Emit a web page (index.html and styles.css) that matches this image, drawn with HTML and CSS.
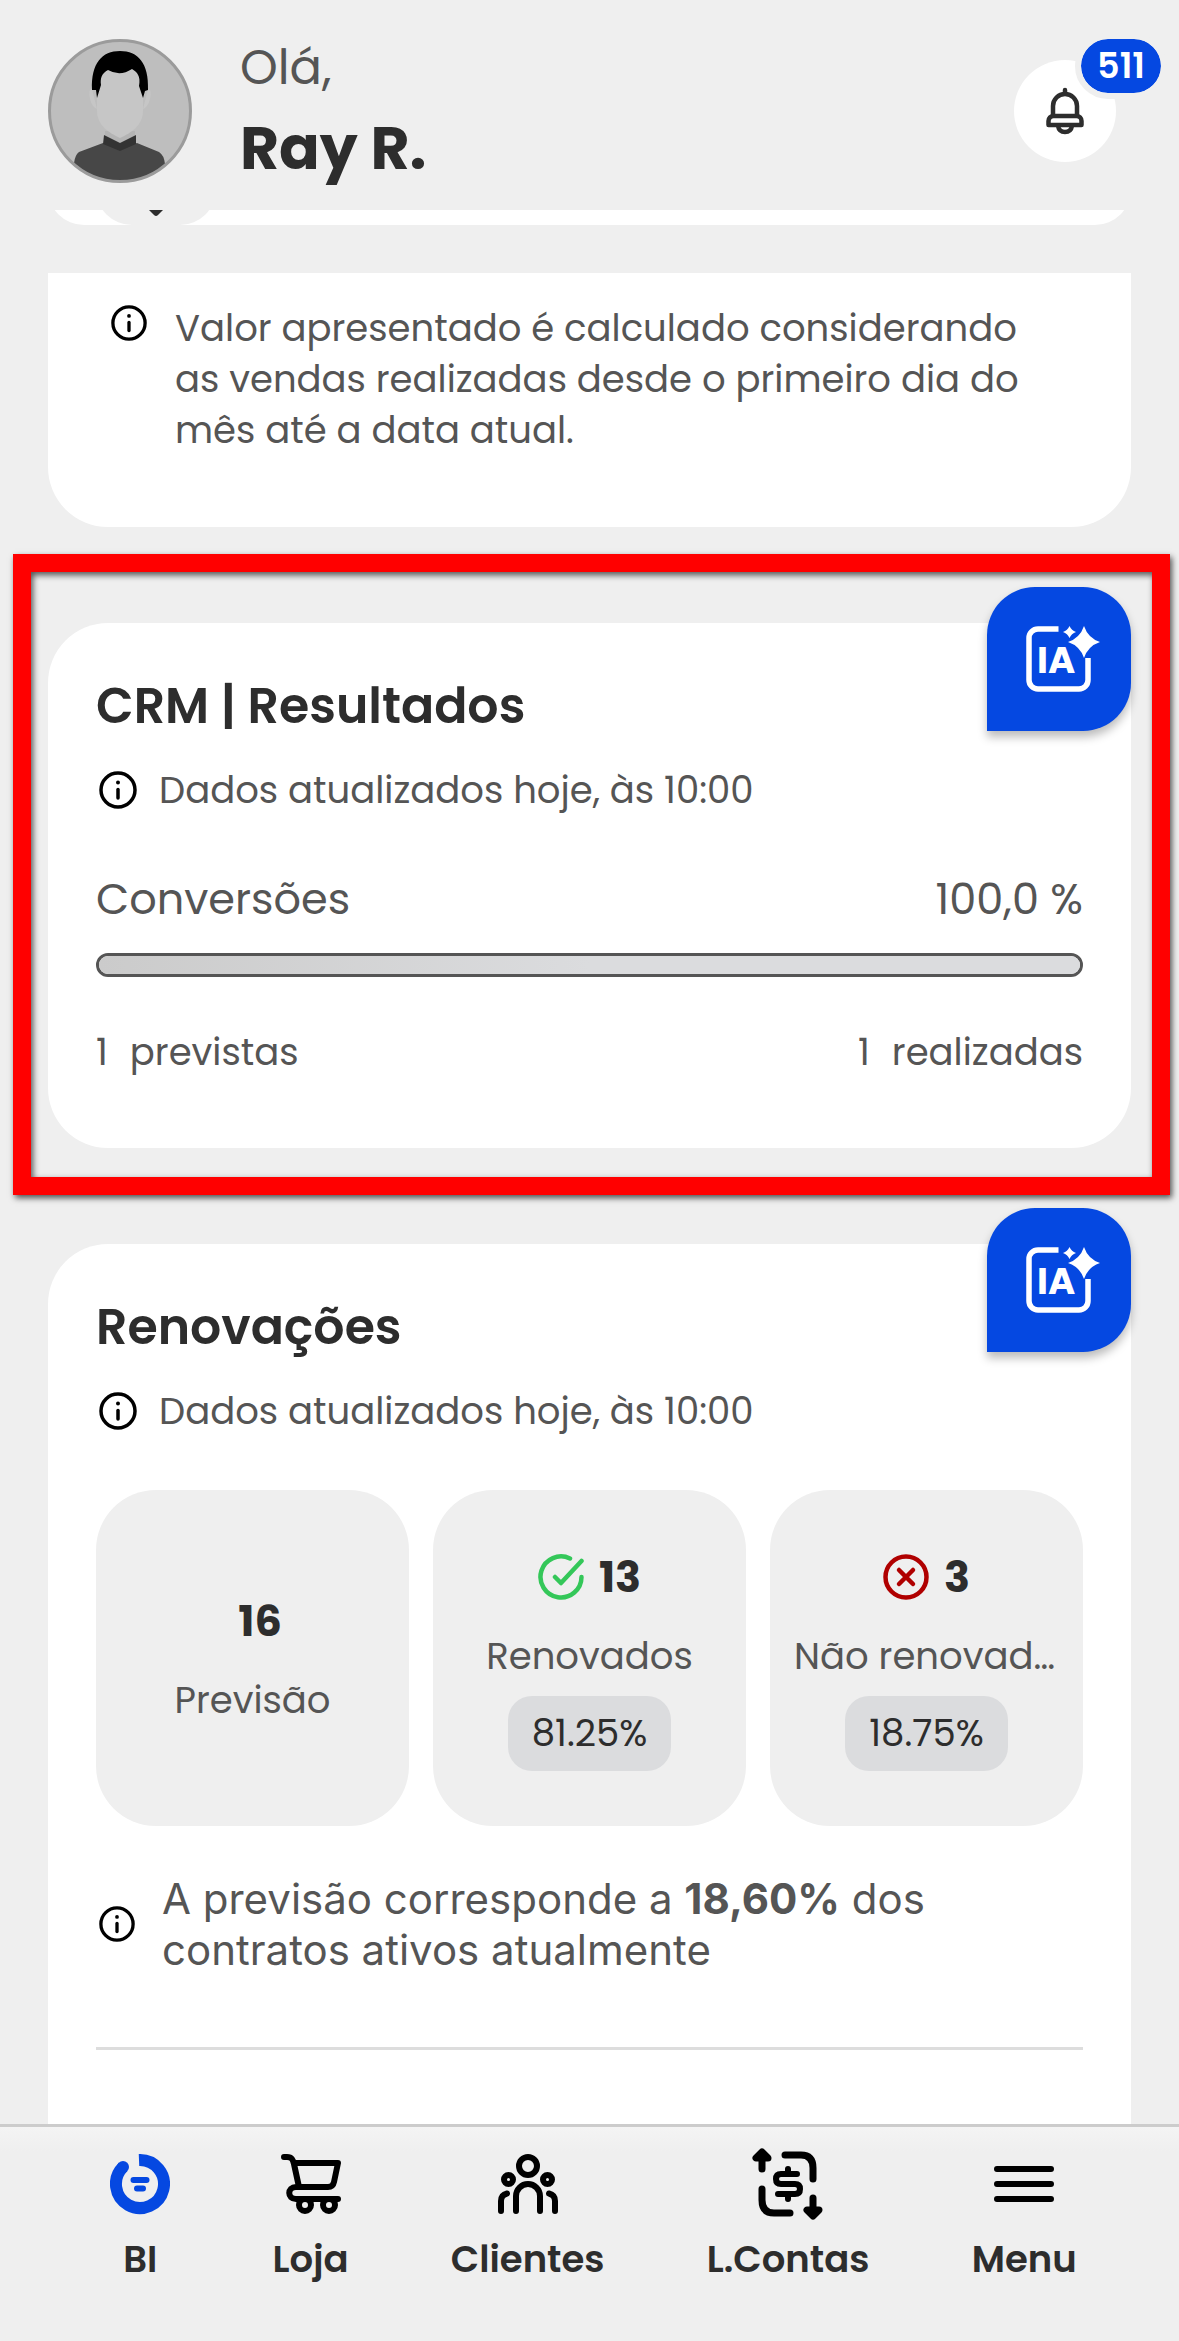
FILE: index.html
```html
<!DOCTYPE html>
<html lang="pt-BR">
<head>
<meta charset="utf-8">
<meta name="viewport" content="width=device-width, initial-scale=1">
<title>BI</title>
<link rel="stylesheet" href="styles.css">
</head>
<body>
<svg class="sprite" aria-hidden="true">
  <symbol id="info" viewBox="0 0 38 38">
    <circle cx="19" cy="19" r="17" fill="none" stroke="#000" stroke-width="3.500"/>
    <circle cx="19" cy="11.500" r="2" fill="#000"/>
    <path d="M19 18.500v8.500" stroke="#000" stroke-width="3.500" stroke-linecap="round"/>
  </symbol>
  <symbol id="ia" viewBox="0 0 76 66">
    <path d="M32.500 3H12a9 9 0 0 0-9 9v42a9 9 0 0 0 9 9h41a9 9 0 0 0 9-9V32" fill="none" stroke="#fff" stroke-width="5.500"/>
    <path d="M43.500 0q2 4.500 6.500 6-4.500 1.500-6.500 6-2-4.500-6.500-6 4.500-1.500 6.500-6z" fill="#fff"/>
    <path d="M58 0q4 12 16 16-12 4-16 16-4-12-16-16 12-4 16-16z" fill="#fff"/>
  </symbol>
</svg>

<header class="header">
  <svg class="avatar" viewBox="0 0 144 144" aria-hidden="true">
    <defs><clipPath id="round"><circle cx="72" cy="72" r="70"/></clipPath></defs>
    <circle cx="72" cy="72" r="71" fill="#bebebe"/>
    <g clip-path="url(#round)">
      <path d="M57 92h30v12l-15 10-15-10z" fill="#b4b4b4"/>
      <path d="M44 50q-4 0-2 10 2 8 7 10zM100 50q4 0 2 10-2 8-7 10z" fill="#c6c6c6"/>
      <path d="M49 30h46v42c0 14-12 22-23 27-11-5-23-13-23-27z" fill="#c6c6c6"/>
      <path d="M44 51C43 24 54 12 72 12s29 12 28 39l-3 1-2 7-4-12c2-10-2-14-7-17q-12 8-24 1c-6 3-8 8-7 15l-4 13-1-8z"/>
      <path d="M26 144v-20q1-8 5-11l24-9 17 5 17-5 22 9q5 3 6 12v19z" fill="#474747"/>
      <path d="M56 96l16 8 16-8v9l-16 7-17-7z" fill="#333"/>
    </g>
    <circle cx="72" cy="72" r="70.500" fill="none" stroke="#9b9b9b" stroke-width="3"/>
  </svg>
  <div class="greeting">
    <p class="hello">Olá,</p>
    <h1 class="name">Ray R.</h1>
  </div>
  <button class="bell" type="button" aria-label="Notificações">
    <svg width="38" height="48" viewBox="0 0 38 48" fill="none" stroke="#2d2d2d" stroke-width="4.500" stroke-linejoin="round" stroke-linecap="round" aria-hidden="true">
      <path d="M19 3v4M7 28V19a12 12 0 0 1 24 0v9M2.500 38v-4a5 5 0 0 1 5-5h23a5 5 0 0 1 5 5v4zM12 39q1 6 7 6t7-6"/>
    </svg>
    <span class="badge">511</span>
  </button>
</header>

<main class="main">
  <div class="peek">
    <div class="peek-card">
      <div class="peek-pill">
        <svg width="14" height="6" viewBox="0 0 14 6" aria-hidden="true"><path d="M0 0h14L9 5q-2 2-4 0z" fill="#2d2d2d"/></svg>
      </div>
    </div>
  </div>

  <section class="card note-card">
    <svg class="info-small"><use href="#info"/></svg>
    <p class="text">Valor apresentado é calculado considerando as vendas realizadas desde o primeiro dia do mês até a data atual.</p>
  </section>

  <section class="card framed">
    <div class="frame"></div>
    <button class="ia" type="button" aria-label="Análise por IA">
      <svg class="ia-icon"><use href="#ia"/></svg><span class="ia-text">IA</span>
    </button>
    <h2 class="title">CRM | Resultados</h2>
    <div class="updated"><svg class="info"><use href="#info"/></svg><p class="text">Dados atualizados hoje, às 10:00</p></div>
    <div class="between metric"><label for="conv">Conversões</label><span>100,0 %</span></div>
    <progress class="bar" id="conv" value="100" max="100"></progress>
    <div class="between totals">
      <span class="pair"><span>1</span><span>previstas</span></span>
      <span class="pair"><span>1</span><span>realizadas</span></span>
    </div>
  </section>

  <section class="card open">
    <button class="ia" type="button" aria-label="Análise por IA">
      <svg class="ia-icon"><use href="#ia"/></svg><span class="ia-text">IA</span>
    </button>
    <h2 class="title">Renovações</h2>
    <div class="updated"><svg class="info"><use href="#info"/></svg><p class="text">Dados atualizados hoje, às 10:00</p></div>
    <div class="tiles">
      <div class="tile">
        <div class="count"><span class="number">16</span></div>
        <div class="label">Previsão</div>
      </div>
      <div class="tile">
        <div class="count">
          <svg class="mark" viewBox="0 0 46 46" fill="none" stroke="#34c759" stroke-width="4.500" stroke-linecap="round" stroke-linejoin="round" aria-hidden="true"><path d="M32 4.500A20.500 20.500 0 1 0 43.500 23M43.500 7L23 29l-6-6"/></svg>
          <span class="number">13</span>
        </div>
        <div class="label">Renovados</div>
        <div class="pill">81.25%</div>
      </div>
      <div class="tile">
        <div class="count">
          <svg class="mark" viewBox="0 0 46 46" fill="none" stroke="#b00000" stroke-width="4.500" stroke-linecap="round" aria-hidden="true"><circle cx="23" cy="23" r="20.500"/><path d="M16 16l14 14M30 16L16 30"/></svg>
          <span class="number">3</span>
        </div>
        <div class="label">Não renovados</div>
        <div class="pill">18.75%</div>
      </div>
    </div>
    <div class="forecast">
      <svg class="info-small"><use href="#info"/></svg>
      <p>A previsão corresponde a <b>18,60%</b> dos contratos ativos atualmente</p>
    </div>
    <hr class="rule">
  </section>
</main>

<nav class="tabs">
  <a class="tab" href="#bi" aria-current="page">
    <svg class="tab-icon" viewBox="0 0 60 60" fill="none" stroke="#0548e1" aria-hidden="true"><path d="M13 13A24 24 0 1 0 29 6" stroke-width="12"/><circle cx="13" cy="13" r="6" fill="#0548e1" stroke="none"/><path d="M23.500 26h13M27 34.500h6" stroke-width="6" stroke-linecap="round"/></svg>
    <span>BI</span>
  </a>
  <a class="tab" href="#loja">
    <svg class="tab-icon" viewBox="0 0 60 60" fill="none" stroke="#000" stroke-width="6" stroke-linecap="round" stroke-linejoin="round" aria-hidden="true"><path d="M3 3h3c5 0 6 3 7 7l5 23M13 9h44l-4 19q-1 5-6 5H15c-9 0-9 12 0 12h42"/><circle cx="24" cy="51" r="6"/><circle cx="48" cy="51" r="6"/></svg>
    <span>Loja</span>
  </a>
  <a class="tab" href="#clientes">
    <svg class="tab-icon" viewBox="0 0 60 60" fill="none" stroke="#000" stroke-width="6" stroke-linecap="round" aria-hidden="true"><circle cx="30" cy="12" r="9"/><circle cx="10.500" cy="25.500" r="4.500"/><circle cx="49.500" cy="25.500" r="4.500"/><path d="M18 57V42a12 12 0 0 1 24 0v15M3 57V47q0-6 6-7.500M57 57V47q0-6-6-7.500"/></svg>
    <span>Clientes</span>
  </a>
  <a class="tab" href="#contas">
    <svg class="tab-icon wide" viewBox="0 0 72 72" fill="none" stroke="#000" stroke-width="7" stroke-linecap="round" stroke-linejoin="round" aria-hidden="true"><path d="M33 7h16q12 0 12 13v11M10 41v11q0 13 12 13h16M10 21v-8M61 50v9"/><path d="M10 4l-6 6h12zM61 68l-6-6h12z"/><path d="M45 26H29q-5 0-5 5t5 5h14q5 0 5 5t-5 5H26M36 21v3M36 48v3" stroke-width="6"/></svg>
    <span>L.Contas</span>
  </a>
  <a class="tab" href="#menu">
    <svg class="tab-icon" viewBox="0 0 60 60" stroke="#000" stroke-width="6" stroke-linecap="round" aria-hidden="true"><path d="M3 15h54M3 30h54M3 45h54"/></svg>
    <span>Menu</span>
  </a>
</nav>
</body>
</html>
```
FILE: styles.css
```css
* { box-sizing: border-box; margin: 0; }

body {
  display: flex;
  flex-direction: column;
  min-height: 100vh;
  background: #efefef;
  color: #555;
  font-family: "Poppins", "Inter", sans-serif;
  font-size: 37px;
  line-height: 54px;
}

button { border: 0; padding: 0; font: inherit; cursor: pointer; }
svg { flex: none; display: block; }
.sprite { position: absolute; width: 0; height: 0; }

.header {
  display: flex;
  align-items: flex-start;
  gap: 48px;
  padding: 27px 63px 22px 48px;
}
.avatar { width: 144px; height: 144px; margin-top: 12px; }
.greeting { flex: 1; }
.hello { font-size: 48px; line-height: 81px; }
.name { color: #2d2d2d; font-size: 60px; line-height: 80px; font-weight: 700; }
.bell {
  position: relative;
  display: grid;
  place-items: center;
  width: 102px;
  height: 102px;
  margin-top: 33px;
  border-radius: 50%;
  background: #fff;
}
.badge {
  position: absolute;
  top: -27px;
  right: -51px;
  padding: 0 16px;
  border: 6px solid #efefef;
  border-radius: 33px;
  background: #0548e1;
  background-clip: padding-box;
  color: #fff;
  font-size: 35px;
  font-weight: 600;
}

.main {
  flex: 1;
  display: flex;
  flex-direction: column;
  padding: 0 48px;
}

.peek {
  display: flex;
  align-items: flex-end;
  height: 15px;
  margin-bottom: 48px;
  overflow: hidden;
}
.peek-card {
  flex: 1;
  padding: 0 48px;
  border-radius: 36px;
  background: #fff;
}
.peek-pill {
  display: flex;
  align-items: flex-end;
  justify-content: center;
  width: 120px;
  height: 96px;
  padding-bottom: 9px;
  border-radius: 36px;
  background: #efefef;
}

.card {
  position: relative;
  margin-bottom: 96px;
  padding: 48px 48px 69px;
  border-radius: 60px;
  background: #fff;
}
.note-card {
  display: flex;
  gap: 28px;
  padding: 30px 72px 71px 63px;
  border-radius: 0 0 60px 60px;
  line-height: 51px;
}
.note-card .info-small { margin-top: 2px; }
.open {
  flex: 1;
  margin-bottom: 0;
  border-radius: 60px 60px 0 0;
}

.frame {
  position: absolute;
  inset: -69px -39px -47px -35px;
  border: 18px solid #f00;
  box-shadow: 2px 3px 6px #000a, inset 2px 3px 6px #000a;
  pointer-events: none;
}

.ia {
  position: absolute;
  top: -36px;
  right: 0;
  width: 144px;
  height: 144px;
  border-radius: 48px 48px 48px 0;
  background: #0548e1;
  box-shadow: 0 6px 10px #0004;
  color: #fff;
}
.ia-icon { width: 76px; height: 66px; margin-left: 39px; }
.ia-text {
  position: absolute;
  top: 55px;
  left: 50px;
  font-size: 37px;
  line-height: 36px;
  font-weight: 700;
}

.title {
  margin-bottom: 22px;
  color: #2d2d2d;
  font-size: 49px;
  line-height: 70px;
  font-weight: 600;
}
.info { width: 38px; height: 38px; }
.info-small { width: 36px; height: 36px; }
.updated {
  display: flex;
  align-items: center;
  gap: 22px;
  padding-left: 3px;
  margin-bottom: 52px;
}
.between { display: flex; justify-content: space-between; }
.metric { font-size: 43px; line-height: 60px; }
.pair { display: flex; gap: 22px; }
.bar {
  appearance: none;
  display: block;
  width: 100%;
  height: 24px;
  margin: 24px 0 48px;
  border: 3px solid #555;
  border-radius: 12px;
  background: #dbdcde;
  overflow: hidden;
}
.bar::-webkit-progress-bar { background: #dbdcde; }
.bar::-webkit-progress-value { background: linear-gradient(90deg, #cbcbcb, #dbdcde 50%); }

.tiles {
  display: grid;
  grid-template-columns: repeat(3, minmax(0, 1fr));
  gap: 24px;
  margin-bottom: 47px;
}
.tile {
  display: flex;
  flex-direction: column;
  align-items: center;
  justify-content: center;
  padding: 55px 24px;
  border-radius: 60px;
  background: #efefef;
}
.count {
  display: flex;
  align-items: center;
  margin-bottom: 20px;
  color: #2d2d2d;
  font-size: 43px;
  line-height: 64px;
  font-weight: 700;
}
.number { margin-left: 15px; }
.mark { width: 46px; height: 46px; }
.label {
  max-width: 100%;
  overflow: hidden;
  text-overflow: ellipsis;
  white-space: nowrap;
}
.pill {
  margin-top: 13px;
  padding: 0 24px;
  border-radius: 24px;
  background: #dbdcde;
  color: #2d2d2d;
  line-height: 75px;
}

.forecast {
  display: flex;
  align-items: center;
  gap: 27px;
  padding-left: 3px;
  margin-bottom: 72px;
  font-family: "Inter", sans-serif;
  font-size: 42px;
  line-height: 51px;
}
.forecast p { max-width: 800px; }
.forecast b { font-weight: 700; }
.rule { border: 0; border-top: 3px solid #ddd; }

.tabs {
  display: flex;
  justify-content: space-evenly;
  padding: 21px 0 55px 8px;
  border-top: 3px solid #ccc;
  background: linear-gradient(#f4f4f4, #efefef 24px);
}
.tab {
  display: flex;
  flex-direction: column;
  align-items: center;
  gap: 12px;
  color: #2d2d2d;
  font-weight: 600;
  text-decoration: none;
}
.tab-icon { width: 60px; height: 72px; }
.wide { width: 72px; }
```
